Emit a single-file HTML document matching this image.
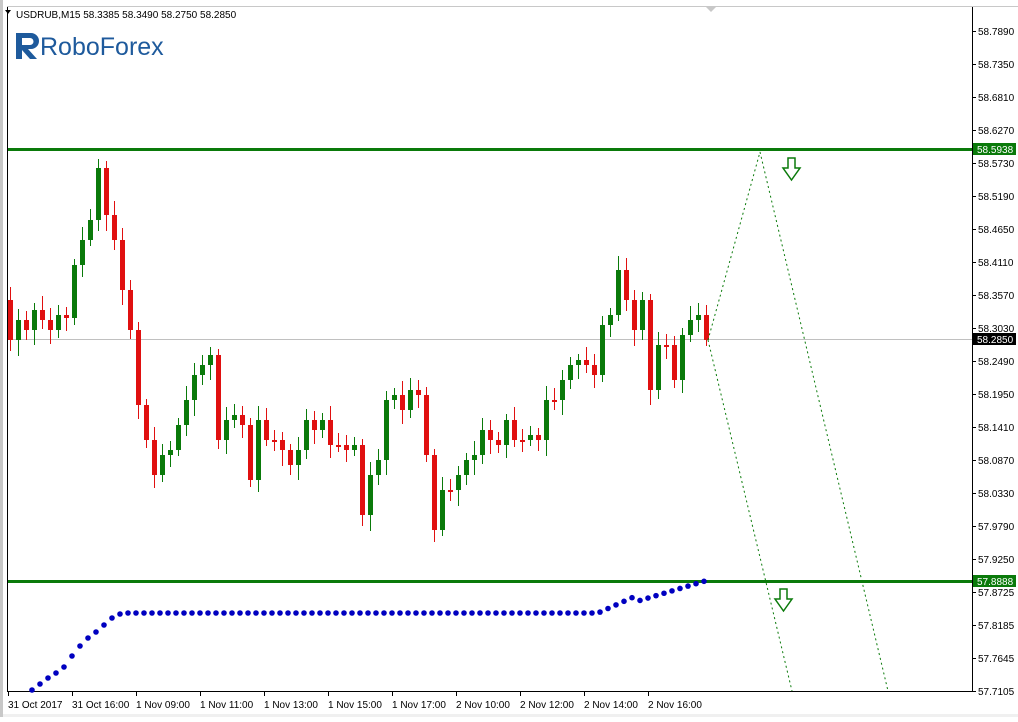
<!DOCTYPE html>
<html><head><meta charset="utf-8"><style>
body{margin:0;background:#fff;width:1018px;height:717px;overflow:hidden;font-family:"Liberation Sans",sans-serif}
svg text{font-family:"Liberation Sans",sans-serif;font-size:10px}
</style></head><body>
<svg id="s" width="1018" height="717" xmlns="http://www.w3.org/2000/svg">
<rect x="0" y="0" width="1018" height="717" fill="#f0f0f0"/>
<rect x="0" y="0" width="1018" height="714" fill="#fff"/>
<rect x="0" y="0" width="3" height="717" fill="#c8c8c8"/>
<line x1="7.5" y1="7" x2="7.5" y2="692" stroke="#000"/>
<line x1="7" y1="691.5" x2="972" y2="691.5" stroke="#000"/>
<line x1="972.5" y1="7" x2="972.5" y2="692" stroke="#000"/>
<line x1="7" y1="6.5" x2="1018" y2="6.5" stroke="#c8c8c8"/>
<polygon points="706,7 716,7 711,12" fill="#c8c8c8"/>
<line x1="8" y1="339.5" x2="972" y2="339.5" stroke="#c0c0c0"/>
<g id="c"></g>
<rect x="8" y="148" width="964" height="3" fill="#0a7a0a"/>
<rect x="8" y="580" width="964" height="3" fill="#0a7a0a"/>
<polyline points="708,340 760,152 888,691" fill="none" stroke="#0a7a0a" stroke-dasharray="2,3"/>
<polyline points="708,340 792,691" fill="none" stroke="#0a7a0a" stroke-dasharray="2,3"/>
<path d="M788,158h7v10h5l-8.5,12l-8.5,-12h5z" fill="#fff" stroke="#0a7a0a" stroke-width="1.5"/>
<path d="M780,589h7v10h5l-8.5,12l-8.5,-12h5z" fill="#fff" stroke="#0a7a0a" stroke-width="1.5"/>
<g id="d" fill="#0000c0"></g>
<polygon points="5,10 11,10 8,14" fill="#000"/>
<text x="16" y="18" fill="#000">USDRUB,M15  58.3385 58.3490 58.2750 58.2850</text>
<path d="M16,33h15a8,8 0 0 1 0,16h-3l9,10h-7l-8,-9v9h-6z M22,38v7h8a3.5,3.5 0 0 0 0,-7z" fill="#1e5a9c" fill-rule="evenodd"/>
<text x="40" y="55" fill="#1e5a9c" style="font-size:25px">RoboForex</text>
<g id="ax"></g>
<rect x="973" y="143" width="43" height="12" fill="#0a7a0a"/>
<text x="977" y="153" fill="#fff">58.5938</text>
<rect x="973" y="333" width="43" height="12" fill="#000"/>
<text x="977" y="343" fill="#fff">58.2850</text>
<rect x="973" y="575" width="43" height="12" fill="#0a7a0a"/>
<text x="977" y="585" fill="#fff">57.8888</text>
</svg>
<script>
var NS="http://www.w3.org/2000/svg";
function el(p,t,a,txt){var e=document.createElementNS(NS,t);for(var k in a)e.setAttribute(k,a[k]);if(txt)e.textContent=txt;document.getElementById(p).appendChild(e);}
var cl=[300,340,320,330,310,320,330,315,318,265,240,220,168,215,240,290,330,405,440,475,455,450,425,400,375,365,355,440,420,415,425,480,420,440,440,450,465,450,420,430,420,445,445,450,445,515,475,460,400,395,410,390,395,455,530,490,490,475,460,455,430,440,445,420,440,440,435,440,400,400,380,365,360,365,375,325,315,270,300,330,300,390,345,345,380,335,320,315,340];
for(var i=1;i<cl.length;i++){var x=10+(i-1)*8,o=cl[i-1],c=cl[i];var up=c<o;var col=up?"#0a7a0a":"#e01010";
var t=Math.min(o,c),b=Math.max(o,c);var h=Math.max(b-t,2);
el("c","line",{x1:x+0.5,y1:t-6-(i*7%9),x2:x+0.5,y2:b+6+(i*5%11),stroke:col});
el("c","rect",{x:x-2,y:t,width:5,height:h,fill:col});}
var dy={24:696,32:690,40:684,48:678,56:673,64:667,72:656,80:646,88:638,96:632,104:625,112:618,120:614};
for(var x=24;x<=705;x+=8){var y;if(dy[x])y=dy[x];else if(x<=598)y=613;else{y=613-(x-598)/(705-598)*32;if(x<640)y=613-(x-598)*0.45}
if(y<=692)el("d","circle",{cx:x,cy:y,r:2.8});}
var pr=["58.7890","58.7350","58.6810","58.6270","58.5730","58.5190","58.4650","58.4110","58.3570","58.3030","58.2490","58.1950","58.1410","58.0870","58.0330","57.9790","57.9250","57.8725","57.8185","57.7645","57.7105"];
var ys=[31,64,97,130,163,196,229,262,295,328,361,394,427,460,493,526,559,592,625,658,691];
for(var i=0;i<pr.length;i++){el("ax","line",{x1:972,y1:ys[i]+0.5,x2:976,y2:ys[i]+0.5,stroke:"#000"});el("ax","text",{x:978,y:ys[i]+4,fill:"#000"},pr[i]);}
var tl=["31 Oct 2017","31 Oct 16:00","1 Nov 09:00","1 Nov 11:00","1 Nov 13:00","1 Nov 15:00","1 Nov 17:00","2 Nov 10:00","2 Nov 12:00","2 Nov 14:00","2 Nov 16:00"];
for(var i=0;i<tl.length;i++){var x=8+i*64;el("ax","line",{x1:x+0.5,y1:692,x2:x+0.5,y2:696,stroke:"#000"});el("ax","text",{x:x,y:708,fill:"#000"},tl[i]);}
</script>
</body></html>
